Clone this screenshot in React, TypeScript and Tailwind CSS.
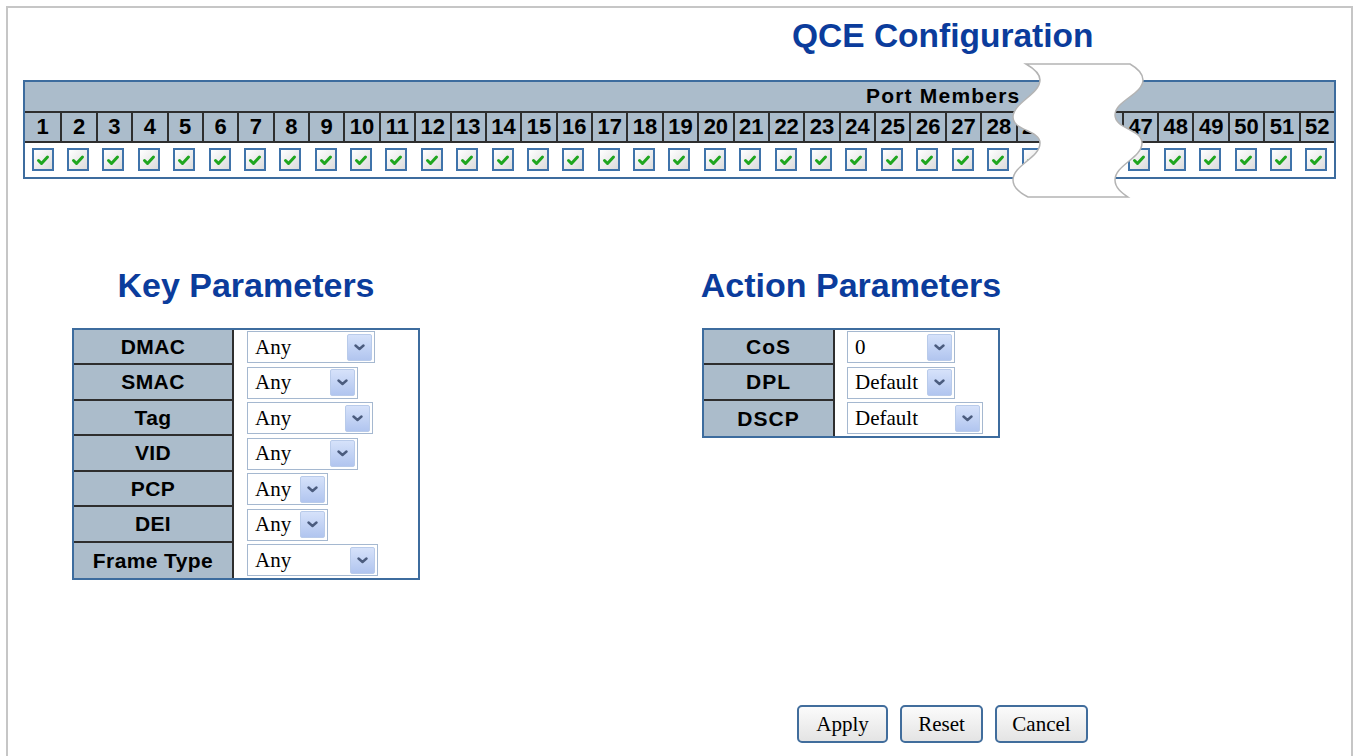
const ports = [...Array.from({ length: 31 }, (_, i) => i + 1), 47, 48, 49, 50, 51, 52];

const keyRows = [
  { label: 'DMAC', w: 'w-[128px]' },
  { label: 'SMAC', w: 'w-[111px]' },
  { label: 'Tag', w: 'w-[126px]' },
  { label: 'VID', w: 'w-[111px]' },
  { label: 'PCP', w: 'w-[81px]' },
  { label: 'DEI', w: 'w-[81px]' },
  { label: 'Frame Type', w: 'w-[131px]' },
];

const actionRows = [
  { label: 'CoS', value: '0', w: 'w-[108px]' },
  { label: 'DPL', value: 'Default', w: 'w-[108px]' },
  { label: 'DSCP', value: 'Default', w: 'w-[136px]' },
];

const CheckBox = () => (
  <div className="w-[22px] h-[23px] border-2 border-[#3f73aa] bg-linear-to-br from-white to-[#dcdcdc] flex items-center justify-center">
    <svg width="14" height="12" viewBox="0 0 14 12">
      <path d="M2.5 6.5 L5.5 9.5 L11.5 3" fill="none" stroke="#1fa61f" strokeWidth="3" strokeLinecap="round" strokeLinejoin="round" />
    </svg>
  </div>
);

const Select = ({ value, w }: { value: string; w: string }) => (
  <div className={`${w} h-[32px] border border-[#a5b8d0] bg-white flex items-center justify-between pl-[7px] pr-[2px]`}>
    <span className="font-['Liberation_Serif',serif] text-[21px] leading-none text-black">{value}</span>
    <div className="w-[25px] h-[27px] rounded-[2px] border border-[#b9cbea] bg-linear-to-b from-[#d6e2fa] to-[#b1c5ef] flex items-center justify-center">
      <svg width="11" height="7" viewBox="0 0 11 7">
        <path d="M1.5 1.5 L5.5 5 L9.5 1.5" fill="none" stroke="#4b5c7e" strokeWidth="2.4" strokeLinecap="round" strokeLinejoin="round" />
      </svg>
    </div>
  </div>
);

const Button = ({ label, w }: { label: string; w: string }) => (
  <button className={`${w} h-[38px] border-2 border-[#416d9c] rounded-[5px] bg-linear-to-b from-[#fbfbfb] to-[#e4e4e4] font-['Liberation_Serif',serif] text-[21px] leading-none text-black`}>
    {label}
  </button>
);

const App = () => {
  return (
    <div className="relative w-[1357px] h-[756px] overflow-hidden bg-white pt-[6px] pl-[6px] font-['Liberation_Sans',Arial,sans-serif]">
      <div className="w-[1347px] h-[800px] border-2 border-[#c6c6c6]">
        {/* Title */}
        <h1 className="ml-[784px] mt-[11px] text-[33.5px] leading-none font-bold text-[#0b3c9c] whitespace-nowrap">
          QCE Configuration
        </h1>

        {/* Port members table */}
        <div className="ml-[15px] mt-[27px] w-[1313px] border-2 border-[#3d6c9e]">
          <div className="h-[29px] bg-[#abbccb] flex items-center pl-[841px] text-[21px] font-bold tracking-[1.2px] text-black whitespace-nowrap">
            Port Members
          </div>
          <div className="grid grid-cols-[repeat(37,minmax(0,1fr))] h-[32px] bg-[#abbccb] border-y-2 border-[#2e2e2e]">
            {ports.map((p, i) => (
              <div
                key={p}
                className={`flex items-center justify-center text-[22px] leading-none font-bold text-black ${i > 0 ? 'border-l-2 border-[#2e2e2e]' : ''}`}
              >
                {p}
              </div>
            ))}
          </div>
          <div className="grid grid-cols-[repeat(37,minmax(0,1fr))] h-[34px] bg-white">
            {ports.map((p) => (
              <div key={p} className="flex items-center justify-center">
                <CheckBox />
              </div>
            ))}
          </div>
        </div>

        {/* Parameters */}
        <div className="flex ml-[64px] mt-[89px]">
          <div className="w-[348px] flex flex-col items-center">
            <h2 className="text-[34px] leading-none font-bold text-[#0b3c9c] whitespace-nowrap">Key Parameters</h2>
            <div className="mt-[26px] w-[348px] border-2 border-[#3d6c9e]">
              {keyRows.map((r, i) => (
                <div key={r.label} className="flex h-[35.5px]">
                  <div className={`w-[160px] bg-[#abbccb] border-r-2 border-[#2e2e2e] flex items-center justify-center text-[21px] font-bold tracking-[0.4px] text-black whitespace-nowrap ${i < keyRows.length - 1 ? 'border-b-2' : ''}`}>
                    {r.label}
                  </div>
                  <div className="flex-1 bg-white flex items-center pl-[13px]">
                    <Select value="Any" w={r.w} />
                  </div>
                </div>
              ))}
            </div>
          </div>

          <div className="ml-[282px] w-[298px] flex flex-col items-center">
            <h2 className="text-[34px] leading-none font-bold text-[#0b3c9c] whitespace-nowrap">Action Parameters</h2>
            <div className="mt-[26px] w-[298px] border-2 border-[#3d6c9e]">
              {actionRows.map((r, i) => (
                <div key={r.label} className="flex h-[35.5px]">
                  <div className={`w-[131px] bg-[#abbccb] border-r-2 border-[#2e2e2e] flex items-center justify-center text-[21px] font-bold tracking-[1px] text-black ${i < actionRows.length - 1 ? 'border-b-2' : ''}`}>
                    {r.label}
                  </div>
                  <div className="flex-1 bg-white flex items-center pl-[12px]">
                    <Select value={r.value} w={r.w} />
                  </div>
                </div>
              ))}
            </div>
          </div>
        </div>

        {/* Buttons */}
        <div className="flex gap-[12px] ml-[789px] mt-[125px]">
          <Button label="Apply" w="w-[91px]" />
          <Button label="Reset" w="w-[83px]" />
          <Button label="Cancel" w="w-[93px]" />
        </div>
      </div>

      {/* Torn-out section over the port table */}
      <svg className="absolute left-[1000px] top-[56px]" width="160" height="150" viewBox="1000 56 160 150">
        <path
          d="M1026 64 L1130 64 C1137 68 1143 74 1143 80 C1143 94 1115 101 1115 115 C1115 129 1142 129 1142 143 C1142 158 1115 165 1115 180 C1115 188 1122 193 1128 197 L1028 197 C1020 193 1013 188 1013 180 C1013 165 1040 158 1040 143 C1040 130 1013 131 1013 117 C1013 103 1040 94 1040 80 C1040 73 1033 68 1026 64 Z"
          fill="white"
          stroke="#b4b4b4"
          strokeWidth="1.5"
        />
      </svg>
    </div>
  );
};

export default App;
